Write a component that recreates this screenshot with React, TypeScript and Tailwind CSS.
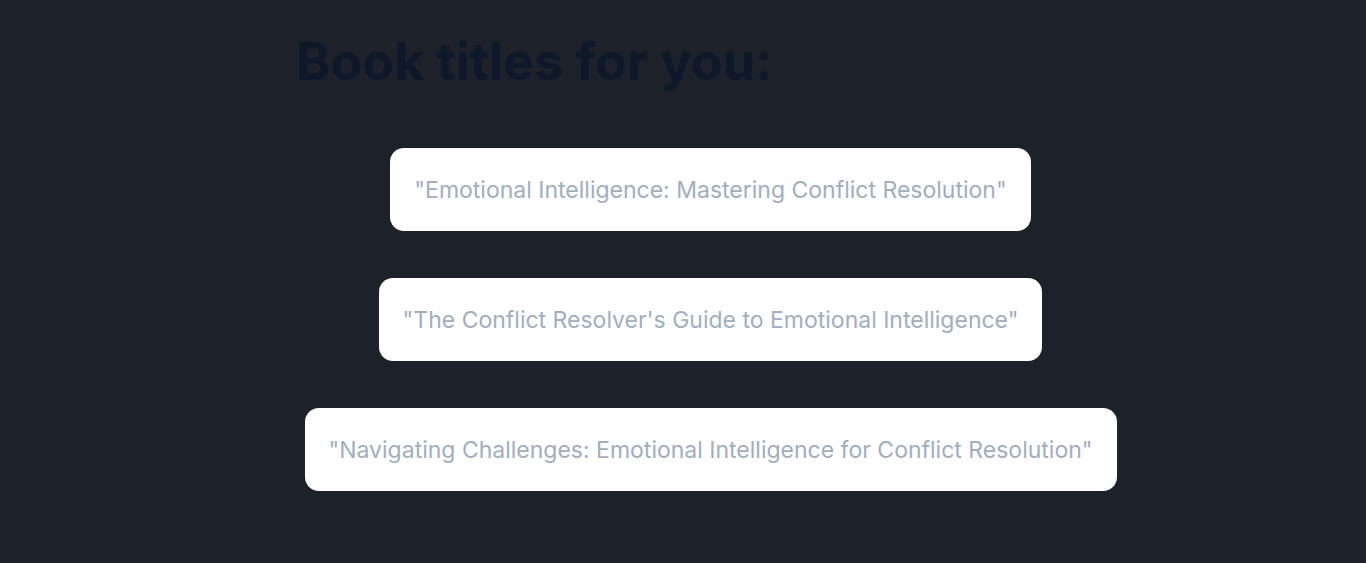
export default function App() {
  const titles = [
    '"Emotional Intelligence: Mastering Conflict Resolution"',
    '"The Conflict Resolver\'s Guide to Emotional Intelligence"',
    '"Navigating Challenges: Emotional Intelligence for Conflict Resolution"',
  ];

  return (
    <div className="min-h-screen bg-[#1d212a] font-['Inter',sans-serif]">
      <div className="ml-[296px] w-[829px] pt-[36px]">
        <h1 className="text-[52px] leading-[52px] font-bold text-[#0f172a]">Book titles for you:</h1>
        <div className="mt-[60px] flex flex-col items-center gap-[47px]">
          {titles.map((t) => (
            <div
              key={t}
              className="rounded-[14px] bg-white px-6 pt-[27px] pb-[25px] text-[23px] leading-[31px] text-[#a0aec0]"
            >
              {t}
            </div>
          ))}
        </div>
      </div>
    </div>
  );
}
